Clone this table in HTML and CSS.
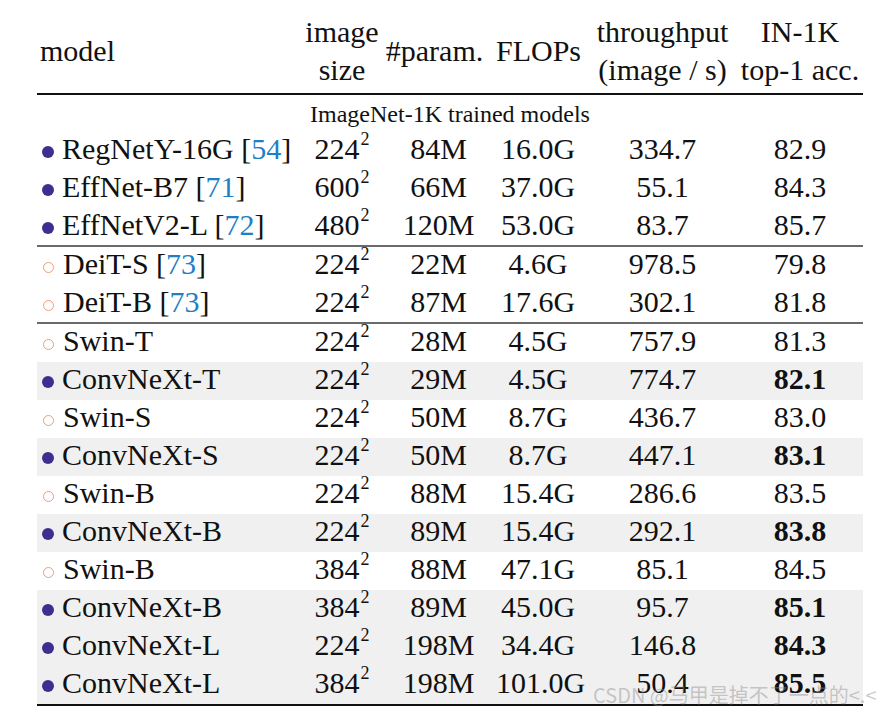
FILE: index.html
```html
<!DOCTYPE html>
<html lang="en">

<head>
    <meta charset="UTF-8">
    <meta name="viewport" content="width=device-width, initial-scale=1.0">
    <title>ImageNet-1K results</title>
    <link rel="stylesheet" href="styles.css">
</head>

<body>

    <div class="sheet">
        <table class="results">
            <colgroup>
                <col class="c-model">
                <col class="c-size">
                <col class="c-param">
                <col class="c-flops">
                <col class="c-thr">
                <col class="c-acc">
            </colgroup>

            <!-- Header -->
            <thead>
                <tr>
                    <th class="model-head">model</th>
                    <th>image<br>size</th>
                    <th class="param-head">#param.</th>
                    <th>FLOPs</th>
                    <th class="thr">throughput<br>(image / s)</th>
                    <th>IN-1K<br>top-1 acc.</th>
                </tr>
            </thead>

            <tbody>
                <tr class="section">
                    <td colspan="6">ImageNet-1K trained models</td>
                </tr>

                <!-- ConvNets -->
                <tr>
                    <td class="model"><span class="dot"></span>RegNetY-16G [<span class="ref">54</span>]</td>
                    <td>224<sup>2</sup></td>
                    <td>84M</td>
                    <td>16.0G</td>
                    <td class="thr">334.7</td>
                    <td>82.9</td>
                </tr>
                <tr>
                    <td class="model"><span class="dot"></span>EffNet-B7 [<span class="ref">71</span>]</td>
                    <td>600<sup>2</sup></td>
                    <td>66M</td>
                    <td>37.0G</td>
                    <td class="thr">55.1</td>
                    <td>84.3</td>
                </tr>
                <tr class="group-end">
                    <td class="model"><span class="dot"></span>EffNetV2-L [<span class="ref">72</span>]</td>
                    <td>480<sup>2</sup></td>
                    <td>120M</td>
                    <td>53.0G</td>
                    <td class="thr">83.7</td>
                    <td>85.7</td>
                </tr>

                <!-- DeiT -->
                <tr>
                    <td class="model"><span class="ring"></span>DeiT-S [<span class="ref">73</span>]</td>
                    <td>224<sup>2</sup></td>
                    <td>22M</td>
                    <td>4.6G</td>
                    <td class="thr">978.5</td>
                    <td>79.8</td>
                </tr>
                <tr class="group-end">
                    <td class="model"><span class="ring"></span>DeiT-B [<span class="ref">73</span>]</td>
                    <td>224<sup>2</sup></td>
                    <td>87M</td>
                    <td>17.6G</td>
                    <td class="thr">302.1</td>
                    <td>81.8</td>
                </tr>

                <!-- Swin vs ConvNeXt -->
                <tr>
                    <td class="model"><span class="ring"></span>Swin-T</td>
                    <td>224<sup>2</sup></td>
                    <td>28M</td>
                    <td>4.5G</td>
                    <td class="thr">757.9</td>
                    <td>81.3</td>
                </tr>
                <tr class="ours">
                    <td class="model"><span class="dot"></span>ConvNeXt-T</td>
                    <td>224<sup>2</sup></td>
                    <td>29M</td>
                    <td>4.5G</td>
                    <td class="thr">774.7</td>
                    <td><b>82.1</b></td>
                </tr>
                <tr>
                    <td class="model"><span class="ring"></span>Swin-S</td>
                    <td>224<sup>2</sup></td>
                    <td>50M</td>
                    <td>8.7G</td>
                    <td class="thr">436.7</td>
                    <td>83.0</td>
                </tr>
                <tr class="ours">
                    <td class="model"><span class="dot"></span>ConvNeXt-S</td>
                    <td>224<sup>2</sup></td>
                    <td>50M</td>
                    <td>8.7G</td>
                    <td class="thr">447.1</td>
                    <td><b>83.1</b></td>
                </tr>
                <tr>
                    <td class="model"><span class="ring"></span>Swin-B</td>
                    <td>224<sup>2</sup></td>
                    <td>88M</td>
                    <td>15.4G</td>
                    <td class="thr">286.6</td>
                    <td>83.5</td>
                </tr>
                <tr class="ours">
                    <td class="model"><span class="dot"></span>ConvNeXt-B</td>
                    <td>224<sup>2</sup></td>
                    <td>89M</td>
                    <td>15.4G</td>
                    <td class="thr">292.1</td>
                    <td><b>83.8</b></td>
                </tr>
                <tr>
                    <td class="model"><span class="ring"></span>Swin-B</td>
                    <td>384<sup>2</sup></td>
                    <td>88M</td>
                    <td>47.1G</td>
                    <td class="thr">85.1</td>
                    <td>84.5</td>
                </tr>
                <tr class="ours">
                    <td class="model"><span class="dot"></span>ConvNeXt-B</td>
                    <td>384<sup>2</sup></td>
                    <td>89M</td>
                    <td>45.0G</td>
                    <td class="thr">95.7</td>
                    <td><b>85.1</b></td>
                </tr>
                <tr class="ours">
                    <td class="model"><span class="dot"></span>ConvNeXt-L</td>
                    <td>224<sup>2</sup></td>
                    <td>198M</td>
                    <td>34.4G</td>
                    <td class="thr">146.8</td>
                    <td><b>84.3</b></td>
                </tr>
                <tr class="ours last">
                    <td class="model"><span class="dot"></span>ConvNeXt-L</td>
                    <td>384<sup>2</sup></td>
                    <td>198M</td>
                    <td>101.0G</td>
                    <td class="thr">50.4</td>
                    <td><b>85.5</b></td>
                </tr>
            </tbody>
        </table>

        <!-- Watermark -->
        <div class="watermark">CSDN @马甲是掉不了一点的&lt;.&lt;</div>
    </div>

</body>

</html>
```

FILE: styles.css
```css
/* General Reset */
* {
    margin: 0;
    padding: 0;
    box-sizing: border-box;
}

body {
    background-color: #fff;
    color: #111;
    font-family: "Liberation Serif", "Times New Roman", serif;
}

.sheet {
    position: relative;
    width: 881px;
    height: 712px;
    padding: 13px 0 0 37px;
}

/* Table */
.results {
    width: 826px;
    table-layout: fixed;
    border-collapse: separate;
    border-spacing: 0;
    font-size: 30px;
}

.c-model { width: 266px; }
.c-size  { width: 78px; }
.c-param { width: 115px; }
.c-flops { width: 84px; }
.c-thr   { width: 157px; }
.c-acc   { width: 126px; }

.results th {
    font-weight: normal;
    line-height: 38px;
    height: 80px;
    padding-bottom: 4px;
    vertical-align: middle;
    text-align: center;
    white-space: nowrap;
    border-bottom: 2px solid #111;
}

.results th.model-head {
    text-align: left;
    padding-left: 3px;
}

.results th.param-head {
    padding-right: 8px;
}

.results td {
    line-height: 34px;
    height: 38px;
    padding: 0 0 4px;
    text-align: center;
    white-space: nowrap;
}

.results .thr {
    padding-left: 8px;
}

.results td.model {
    text-align: left;
    padding-left: 5px;
}

/* Section title row */
.section td {
    font-size: 24px;
    line-height: 36px;
    height: 37px;
    padding: 1px 0 0;
}

.group-end td {
    padding-bottom: 3px;
    border-bottom: 2px solid #6a6a6a;
}

.last td {
    border-bottom: 2px solid #111;
}

.ours td {
    background-color: #f0f0f0;
}

.results b {
    font-weight: bold;
}

.results sup {
    font-size: 18px;
    line-height: 0;
    vertical-align: 14px;
    margin-left: 1px;
}

.ref {
    color: #1f7fc6;
}

/* Markers */
.dot,
.ring {
    display: inline-block;
    width: 12px;
    height: 12px;
    border-radius: 50%;
    margin-right: 8px;
    vertical-align: 1px;
}

.dot {
    background-color: #3e2f8e;
}

.ring {
    width: 11px;
    height: 11px;
    margin: 0 9px 0 1px;
    border: 1.5px solid #f39d78;
}

/* Watermark */
.watermark {
    position: absolute;
    left: 593px;
    top: 683px;
    font-family: "Noto Sans CJK SC", "Noto Sans", sans-serif;
    font-size: 20px;
    line-height: 24px;
    color: rgba(140, 140, 140, 0.45);
    white-space: nowrap;
}
```
